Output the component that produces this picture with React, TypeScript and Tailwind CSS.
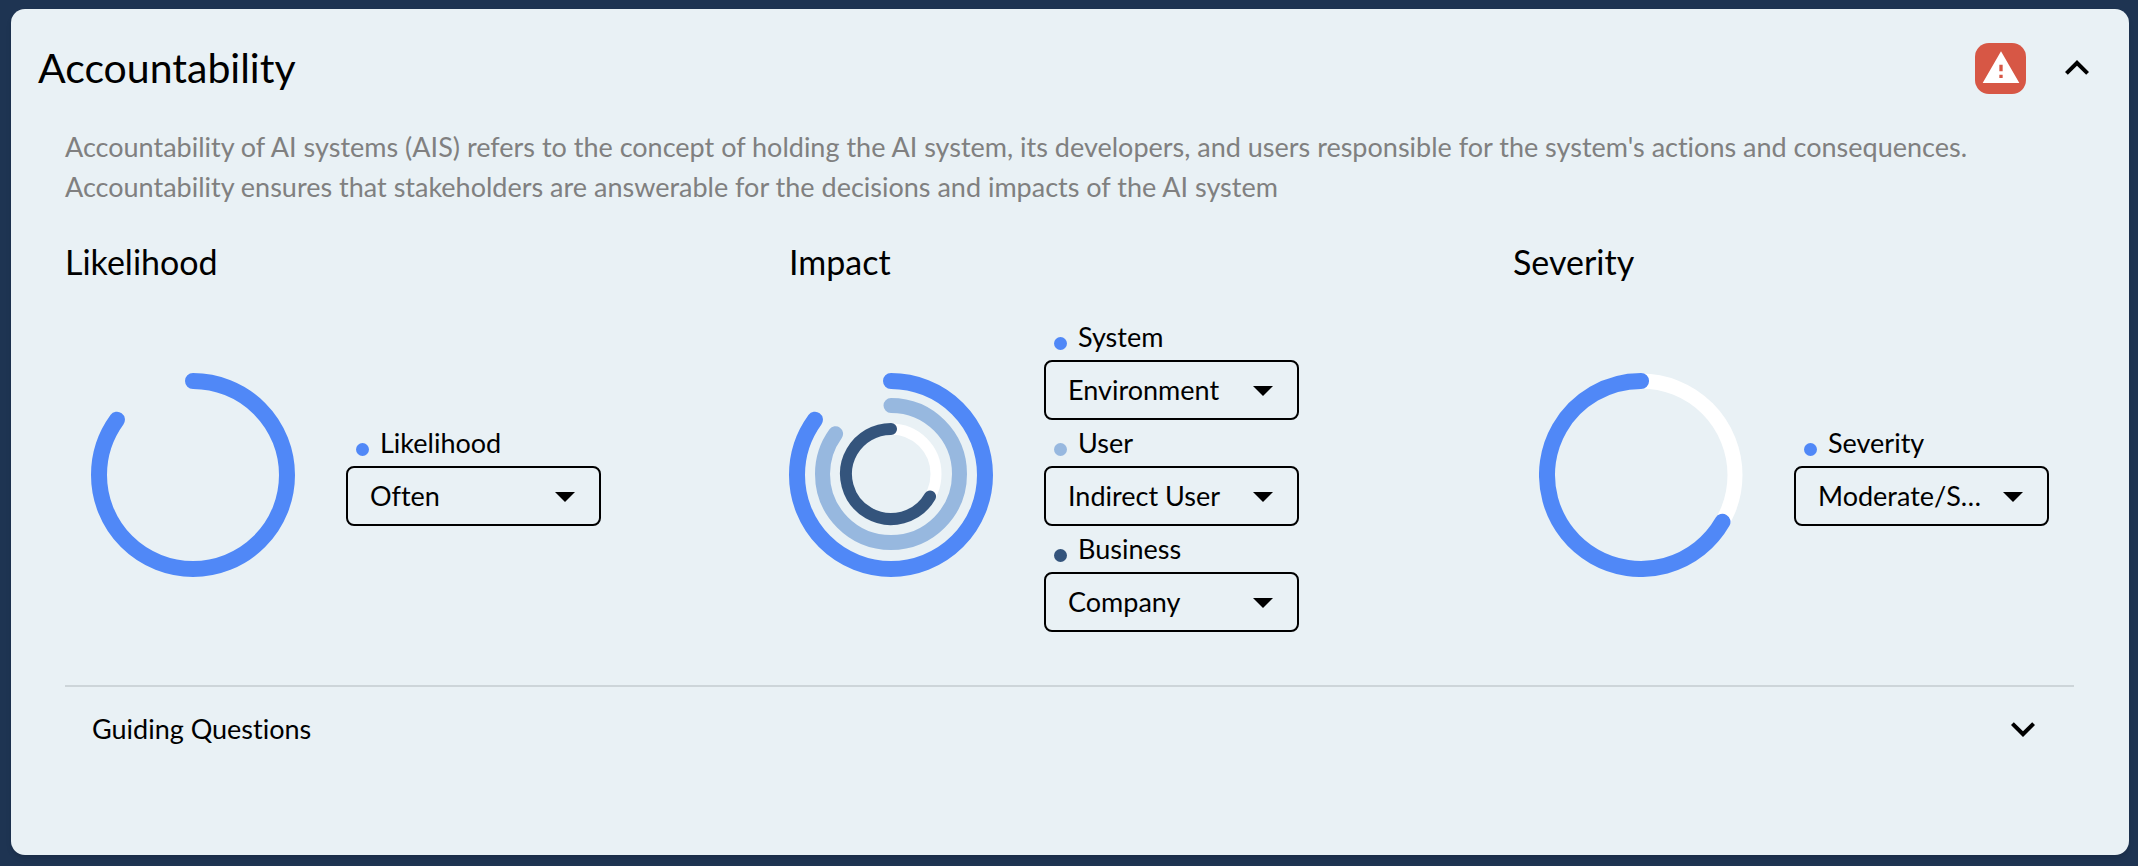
import { useState } from "react";
import { MdExpandLess, MdExpandMore, MdWarning, MdArrowDropDown } from "react-icons/md";

type Ring = {
  radius: number;
  width: number;
  color: string;
  // start and sweep are percentages of the full circle, clockwise from the top
  start: number;
  sweep: number;
  track?: boolean;
};

type Field = {
  id: string;
  label: string;
  dot: string;
  options: string[];
};

type Metric = {
  title: string;
  padding: string;
  rings: Ring[];
  fields: Field[];
};

const metrics: Metric[] = [
  {
    title: "Likelihood",
    padding: "px-[26px]",
    rings: [{ radius: 94, width: 16, color: "#5088f7", start: 0, sweep: 85 }],
    fields: [
      { id: "likelihood", label: "Likelihood", dot: "bg-[#5088f7]", options: ["Often", "Rarely", "Sometimes"] },
    ],
  },
  {
    title: "Impact",
    padding: "",
    rings: [
      { radius: 94, width: 16, color: "#5088f7", start: 0, sweep: 85 },
      { radius: 68.5, width: 15, color: "#97b8df", start: 0, sweep: 85 },
      { radius: 45, width: 12, color: "#34547c", start: 33.3, sweep: 66.7, track: true },
    ],
    fields: [
      { id: "system", label: "System", dot: "bg-[#5088f7]", options: ["Environment", "System"] },
      { id: "user", label: "User", dot: "bg-[#97b8df]", options: ["Indirect User", "Direct User"] },
      { id: "business", label: "Business", dot: "bg-[#34547c]", options: ["Company", "Team"] },
    ],
  },
  {
    title: "Severity",
    padding: "px-[26px]",
    rings: [{ radius: 94, width: 16, color: "#5088f7", start: 33.3, sweep: 66.7, track: true }],
    fields: [
      { id: "severity", label: "Severity", dot: "bg-[#5088f7]", options: ["Moderate/Severe", "Low"] },
    ],
  },
];

function RingChart({ rings }: { rings: Ring[] }) {
  return (
    <svg viewBox="-102 -102 204 204" className="mt-1 size-[204px] shrink-0" fill="none" aria-hidden="true">
      {rings.map((ring, i) => (
        // inner rings sit one unit higher than the outer one
        <g key={ring.radius} strokeWidth={ring.width} transform={i > 0 ? "translate(0 -1)" : undefined}>
          {ring.track && <circle r={ring.radius} stroke="#ffffff" strokeWidth={ring.width - 1} />}
          <circle
            r={ring.radius}
            stroke={ring.color}
            strokeLinecap="round"
            pathLength={100}
            strokeDasharray={`${ring.sweep} 100`}
            transform={`rotate(${ring.start * 3.6 - 90})`}
          />
        </g>
      ))}
    </svg>
  );
}

function SelectField({ field }: { field: Field }) {
  const [value, setValue] = useState(field.options[0]);

  return (
    <div>
      <label htmlFor={field.id} className="flex h-[46px] items-center gap-[11px] pl-[10px]">
        <span className={`mt-3 size-[13px] rounded-full ${field.dot}`} />
        {field.label}
      </label>
      <div className="relative">
        <select
          id={field.id}
          value={value}
          onChange={(e) => setValue(e.target.value)}
          className="block h-[60px] w-full appearance-none truncate rounded-lg border-2 border-black bg-transparent pr-[62px] pl-[22px]"
        >
          {field.options.map((option) => (
            <option key={option}>{option}</option>
          ))}
        </select>
        <MdArrowDropDown className="pointer-events-none absolute top-[6px] right-3 size-12" />
      </div>
    </div>
  );
}

export default function App() {
  const [showQuestions, setShowQuestions] = useState(false);

  return (
    <div className="flex min-h-screen bg-[#1e3452] pt-[9px] pr-[9px] pb-[11px] pl-[11px] font-['Lato',sans-serif] text-[27px] leading-10 text-black [font-variant-ligatures:none]">
      <section className="flex-1 rounded-[14px] bg-[#e9f1f5] shadow-md">
        {/* Header */}
        <header className="flex items-center justify-between pt-[29px] pr-7 pl-[27px]">
          <h1 className="text-[41px] leading-[60px]">Accountability</h1>
          <div className="flex items-center gap-[27px]">
            <span className="flex size-[51px] items-center justify-center rounded-[14px] bg-[#d75745]">
              <MdWarning className="size-10 text-white" />
            </span>
            <button type="button" aria-label="Collapse">
              <MdExpandLess className="size-12" />
            </button>
          </div>
        </header>

        <div className="pt-[29px] pr-[55px] pl-[54px]">
          <p className="text-[#808080]">
            Accountability of AI systems (AIS) refers to the concept of holding the AI system, its developers, and users
            responsible for the system's actions and consequences. Accountability ensures that stakeholders are
            answerable for the decisions and impacts of the AI system
          </p>

          {/* Metrics */}
          <div className="mt-[31px] grid grid-cols-3 gap-[163px]">
            {metrics.map((metric) => (
              <div key={metric.title} className="flex flex-col">
                <h2 className="text-[34px] leading-[48px]">{metric.title}</h2>
                <div className={`mt-7 flex flex-1 items-center gap-[51px] ${metric.padding}`}>
                  <RingChart rings={metric.rings} />
                  <div className="w-[255px] shrink-0">
                    {metric.fields.map((field) => (
                      <SelectField key={field.id} field={field} />
                    ))}
                  </div>
                </div>
              </div>
            ))}
          </div>

          {/* Guiding questions */}
          <button
            type="button"
            aria-expanded={showQuestions}
            onClick={() => setShowQuestions(!showQuestions)}
            className="mt-[53px] flex w-full items-center justify-between border-t-2 border-[#cdd5d9] px-[27px] py-[18px]"
          >
            Guiding Questions
            <MdExpandMore className="size-12" />
          </button>
        </div>
      </section>
    </div>
  );
}
